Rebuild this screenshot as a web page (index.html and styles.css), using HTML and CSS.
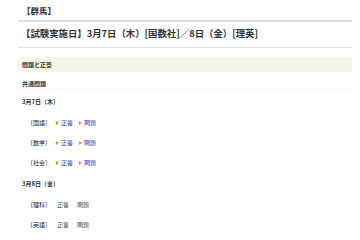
FILE: index.html
```html
<!DOCTYPE html>
<html lang="ja">
<head>
<meta charset="utf-8">
<link rel="stylesheet" href="styles.css">
</head>
<body>
<div class="page">
  <div class="pref">【群馬】</div>
  <h1 class="title">【試験実施日】3月7日（木）[国数社]／8日（金）[理英]</h1>
  <div class="bar">問題と正答</div>
  <div class="common">共通問題</div>
  <div class="date">3月7日（木）</div>
  <div class="row"><span class="subj">［国語］</span><span class="lk">正答</span><span class="lk">問題</span></div>
  <div class="row"><span class="subj">［数学］</span><span class="lk">正答</span><span class="lk">問題</span></div>
  <div class="row"><span class="subj">［社会］</span><span class="lk">正答</span><span class="lk">問題</span></div>
  <div class="date">3月8日（金）</div>
  <div class="row"><span class="subj">［理科］</span><span class="nl">正答</span><span class="nl">問題</span></div>
  <div class="row"><span class="subj">［英語］</span><span class="nl">正答</span><span class="nl">問題</span></div>
</div>
</body>
</html>
```
FILE: styles.css
```css
html, body {
  margin: 0;
  padding: 0;
  background: #fff;
}
body {
  font-family: "Noto Sans CJK JP", "Noto Sans", sans-serif;
  color: #333;
}
.page {
  width: 334px;
  margin-left: 18px;
}
.pref {
  height: 20px;
  line-height: 20px;
  font-size: 8.5px;
  font-weight: bold;
  padding-left: 4px;
  border-bottom: 2px solid #dddddd;
  color: #333;
}
.title {
  margin: 0;
  height: 25px;
  line-height: 22px;
  font-size: 9.4px;
  font-weight: bold;
  padding-left: 3px;
  border-bottom: 1px solid #dedede;
  color: #333;
}
.bar {
  margin-top: 9px;
  height: 15px;
  line-height: 15px;
  background: #f6f6e9;
  font-size: 6px;
  font-weight: bold;
  padding-left: 4px;
}
.common {
  height: 18px;
  line-height: 24px;
  font-size: 6px;
  font-weight: bold;
  padding-left: 4px;
  border-bottom: 1px solid #f0f0f0;
}
.date {
  height: 22px;
  line-height: 22px;
  font-size: 6px;
  font-weight: bold;
  padding-left: 4px;
}
.row {
  height: 20px;
  line-height: 20px;
  font-size: 6px;
  padding-left: 9px;
  display: flex;
  align-items: center;
}
.subj {
  width: 29px;
  color: #222;
}
.lk {
  color: #2a38ad;
  display: flex;
  align-items: center;
  margin-right: 6px;
}
.lk::before {
  content: "";
  width: 0;
  height: 0;
  border-top: 2px solid transparent;
  border-bottom: 2px solid transparent;
  border-left: 3px solid #f08a1c;
  margin-right: 2px;
}
.nl {
  color: #444;
  margin-left: 1px;
  margin-right: 7px;
}
```
